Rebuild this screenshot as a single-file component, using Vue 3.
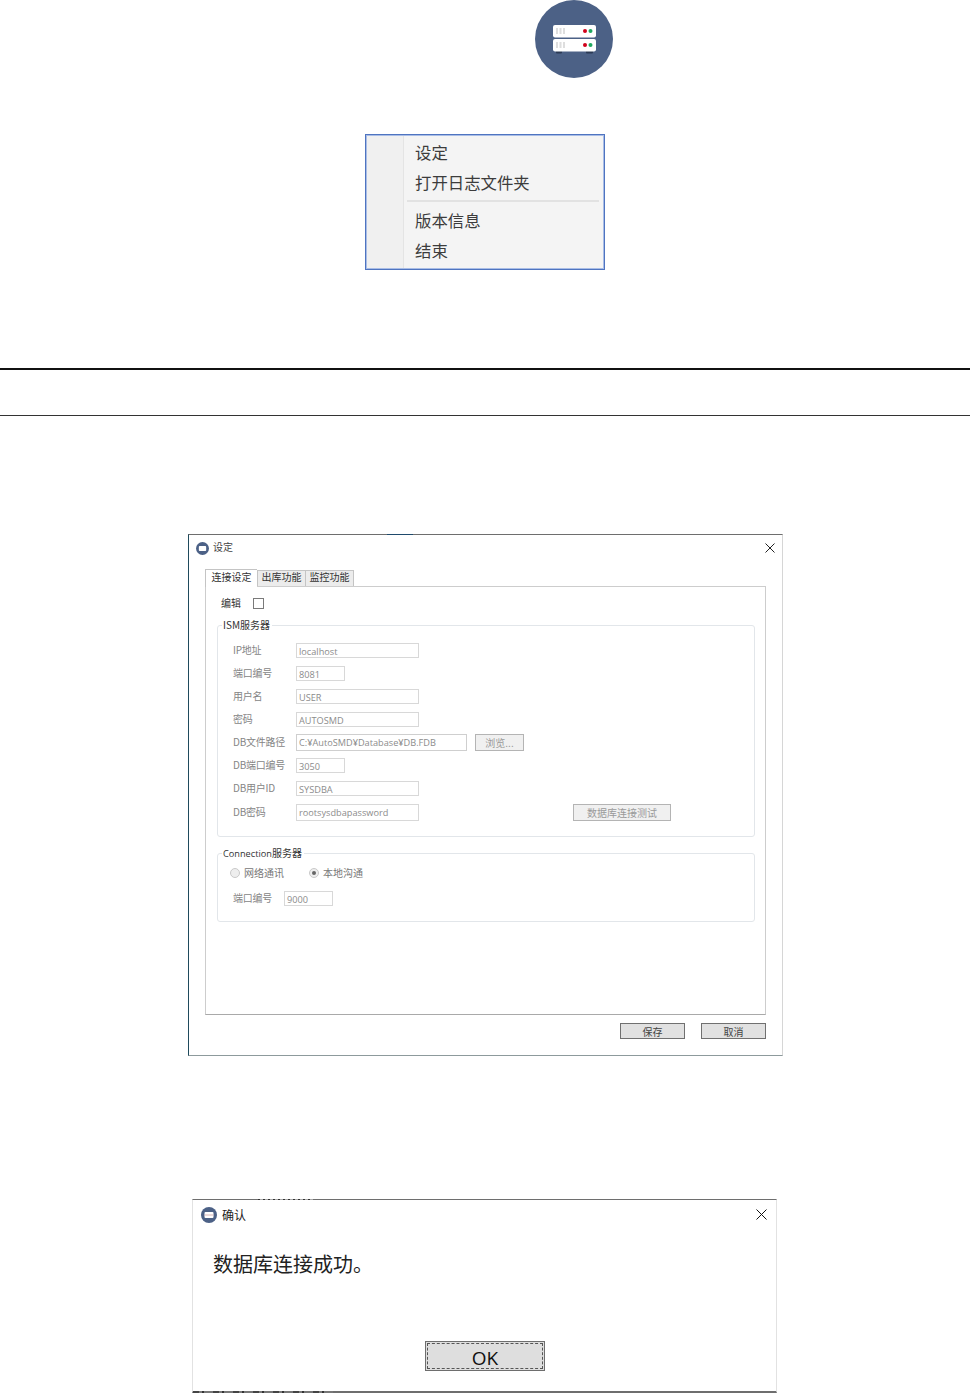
<script setup>
const rows = [
  { label: 'IP地址', value: 'localhost', size: 'md' },
  { label: '端口编号', value: '8081', size: 'sm' },
  { label: '用户名', value: 'USER', size: 'md' },
  { label: '密码', value: 'AUTOSMD', size: 'md' },
  { label: 'DB文件路径', value: 'C:¥AutoSMD¥Database¥DB.FDB', size: 'lg', browse: true },
  { label: 'DB端口编号', value: '3050', size: 'sm' },
  { label: 'DB用户ID', value: 'SYSDBA', size: 'md' },
  { label: 'DB密码', value: 'rootsysdbapassword', size: 'md tall', test: true },
]
</script>

<template>
  <div class="page">
    <div class="logo-wrap">
      <svg class="logo" viewBox="0 0 78 78" width="78" height="78">
        <circle cx="39" cy="39" r="39" fill="#4c6186" />
        <rect x="21" y="50" width="6" height="3.5" rx="1" fill="#2b3a55" />
        <rect x="51" y="50" width="7" height="3.5" rx="1" fill="#2b3a55" />
        <rect x="18" y="25" width="43" height="12.5" rx="2" fill="#fff" />
        <rect x="18" y="39" width="43" height="12.5" rx="2" fill="#fff" />
        <path d="M22 28v6M25.5 28v6M29 28v6M22 42v6M25.5 42v6M29 42v6" stroke="#dedede" stroke-width="2" />
        <circle cx="50" cy="31" r="2" fill="#d0021b" />
        <circle cx="55.5" cy="31" r="2" fill="#1fa860" />
        <circle cx="50" cy="45" r="2" fill="#d0021b" />
        <circle cx="55.5" cy="45" r="2" fill="#1fa860" />
      </svg>
    </div>

    <div class="menu">
      <div class="menu-item">设定</div>
      <div class="menu-item">打开日志文件夹</div>
      <div class="menu-sep"></div>
      <div class="menu-item">版本信息</div>
      <div class="menu-item">结束</div>
    </div>

    <div class="rule-thick"></div>
    <div class="rule-thin"></div>

    <section class="settings">
      <header class="titlebar">
        <svg class="mini" viewBox="0 0 16 16" width="13" height="13">
          <circle cx="8" cy="8" r="8" fill="#4c6186" />
          <rect x="3.5" y="5" width="9" height="6" rx="1" fill="#fff" />
        </svg>
        <span class="title">设定</span>
        <svg class="close" viewBox="0 0 10 10" width="10" height="10">
          <path d="M.5.5l9 9M9.5.5l-9 9" stroke="#222" stroke-width="1" fill="none" />
        </svg>
      </header>

      <nav class="tabs">
        <div class="tab active">连接设定</div>
        <div class="tab tab-b">出库功能</div>
        <div class="tab tab-c">监控功能</div>
      </nav>

      <div class="panel">
        <div class="edit-row">
          <span class="edit-label">编辑</span>
          <span class="check"></span>
        </div>

        <div class="group group-ism">
          <span class="legend">ISM服务器</span>
          <div v-for="r in rows" :key="r.label" class="row">
            <span class="label">{{ r.label }}</span>
            <span class="field" :class="r.size">{{ r.value }}</span>
            <span v-if="r.browse" class="btn-off browse">浏览...</span>
            <span v-if="r.test" class="btn-off test">数据库连接测试</span>
          </div>
        </div>

        <div class="group group-conn">
          <span class="legend"><span class="latin">Connection</span>服务器</span>
          <div class="radios">
            <span class="radio"></span>
            <span class="radio-label first">网络通讯</span>
            <span class="radio on"></span>
            <span class="radio-label">本地沟通</span>
          </div>
          <div class="row port">
            <span class="label short">端口编号</span>
            <span class="field sm">9000</span>
          </div>
        </div>
      </div>

      <footer class="footer">
        <span class="btn">保存</span>
        <span class="btn">取消</span>
      </footer>
    </section>

    <section class="confirm">
      <header class="confirm-bar">
        <svg class="mini" viewBox="0 0 16 16" width="16" height="16">
          <circle cx="8" cy="8" r="8" fill="#4c6186" />
          <rect x="3.5" y="5" width="9" height="6" rx="1" fill="#fff" />
          <path d="M3.5 8h9" stroke="#d9b6b6" stroke-width="1" />
        </svg>
        <span class="confirm-title">确认</span>
        <svg class="close" viewBox="0 0 11 11" width="11" height="11">
          <path d="M.5.5l10 10M10.5.5l-10 10" stroke="#111" stroke-width="1" fill="none" />
        </svg>
      </header>
      <p class="message">数据库连接成功。</p>
      <div class="ok-wrap">
        <div class="ok"><span class="ok-inner">OK</span></div>
      </div>
    </section>
  </div>
</template>

<style scoped>
.page {
  width: 970px;
  height: 1393px;
  overflow: hidden;
  background: #fff;
  font-family: "Noto Sans CJK SC", "Noto Sans", sans-serif;
}
.logo-wrap { height: 78px; padding-left: 535px; }
.logo { display: block; }

.menu {
  box-sizing: border-box;
  width: 240px;
  height: 136px;
  margin: 56px 0 0 365px;
  padding: 2px 5px 0 37px;
  border: 1px solid #4f74c0;
  box-shadow: inset 0 0 0 1px #a9bde6;
  background: linear-gradient(to right, #f0f0f0 37px, #e4e4e4 37px, #e4e4e4 38px, #f4f4f4 38px);
  color: #3c3c3c;
  font-size: 16.4px;
}
.menu-item { height: 30px; line-height: 30px; padding-left: 12px; }
.menu-sep { height: 2px; margin: 3px 0 3px 4px; background: #e2e2e2; }

.rule-thick { height: 2px; margin-top: 98px; background: #111; }
.rule-thin { height: 1px; margin-top: 45px; background: #333; }

.settings {
  box-sizing: border-box;
  position: relative;
  width: 595px;
  height: 522px;
  margin: 118px 0 0 188px;
  border-top: 1px solid #6e6e6e;
  border-left: 1px solid #1f4a5c;
  border-right: 1px solid #d6d6d6;
  border-bottom: 1px solid #8d9a9c;
  display: flex;
  flex-direction: column;
}
.settings::before {
  content: "";
  position: absolute;
  left: 198px;
  top: -1px;
  width: 26px;
  height: 1px;
  background: #1f4a6c;
}
.titlebar {
  height: 26px;
  display: flex;
  align-items: center;
  padding: 0 7px;
  color: #444;
}
.title { margin-left: 4px; padding-bottom: 2px; font-size: 10px; line-height: 1; }
.close { margin-left: auto; }

.tabs {
  display: flex;
  align-items: flex-end;
  height: 25px;
  padding-left: 16px;
  font-size: 10px;
  color: #333;
}
.tab {
  box-sizing: border-box;
  height: 16px;
  line-height: 12px;
  text-align: center;
  background: #ececec;
  border: 1px solid #c4c4c4;
  border-bottom: 0;
}
.tab.active {
  width: 52px;
  height: 18px;
  line-height: 14px;
  background: #fff;
  position: relative;
  top: 1px;
  border-right: 0;
}
.tab-b { width: 49px; }
.tab-c { width: 49px; margin-left: -1px; }

.panel {
  box-sizing: border-box;
  width: 561px;
  height: 429px;
  margin-left: 16px;
  padding: 0 0 0 11px;
  border: 1px solid #cdcdcd;
  border-bottom-color: #a9a9a9;
}
.edit-row {
  display: flex;
  align-items: center;
  height: 12px;
  margin-top: 10px;
  padding-left: 4px;
  font-size: 10px;
  color: #333;
}
.edit-label { padding-bottom: 2px; }
.check {
  box-sizing: border-box;
  width: 11px;
  height: 11px;
  margin-left: 12px;
  border: 1px solid #7a7a7a;
  background: #fff;
}

.group {
  box-sizing: border-box;
  position: relative;
  width: 538px;
  border: 1px solid #e2e6ea;
  border-radius: 3px;
}
.group-ism { height: 212px; margin-top: 16px; padding: 13px 0 0 15px; }
.group-conn { height: 69px; margin-top: 16px; padding: 11px 0 0 12px; }
.legend {
  position: absolute;
  top: -8px;
  left: 4px;
  padding: 0 2px 0 1px;
  background: #fff;
  font-size: 10px;
  line-height: 13px;
  color: #333;
  white-space: nowrap;
}
.latin { font-family: "Open Sans", sans-serif; font-size: 9.2px; }
.row { display: flex; align-items: center; height: 23px; }
.label {
  width: 63px;
  padding-bottom: 2px;
  font-size: 10px;
  letter-spacing: -0.25px;
  color: #858585;
  white-space: nowrap;
}
.field {
  box-sizing: border-box;
  height: 15px;
  padding-left: 2px;
  border: 1px solid #d8d8d8;
  font-family: "Open Sans", "Noto Sans CJK SC", sans-serif;
  font-size: 9.2px;
  line-height: 15px;
  color: #8c8c8c;
  white-space: nowrap;
}
.md { width: 123px; }
.sm { width: 49px; }
.lg { width: 171px; height: 17px; line-height: 16px; border-color: #cfcfcf; }
.tall { height: 17px; line-height: 16px; }
.group-ism .row:last-child { margin-top: 1px; }
.btn-off {
  box-sizing: border-box;
  height: 17px;
  line-height: 15px;
  text-align: center;
  background: #f0f0f0;
  border: 1px solid #b4b4b4;
  font-size: 10px;
  color: #9a9a9a;
}
.browse { width: 49px; margin-left: 8px; }
.test { width: 98px; margin-left: 154px; }

.radios {
  display: flex;
  align-items: center;
  height: 14px;
  font-size: 10px;
  color: #777;
}
.radio {
  box-sizing: border-box;
  position: relative;
  width: 10px;
  height: 10px;
  margin-top: 1px;
  border-radius: 50%;
  background: #eee;
  border: 1px solid #c9c9c9;
}
.radio.on::after {
  content: "";
  position: absolute;
  left: 2px;
  top: 2px;
  width: 4px;
  height: 4px;
  border-radius: 50%;
  background: #666;
}
.radio-label { margin-left: 4px; }
.radio-label.first { margin-right: 25px; }
.port { margin-top: 8px; padding-left: 3px; }
.label.short { width: 51px; }

.footer {
  display: flex;
  justify-content: flex-end;
  gap: 16px;
  margin-top: 8px;
  padding-right: 16px;
}
.btn {
  box-sizing: border-box;
  width: 65px;
  height: 16px;
  line-height: 15px;
  text-align: center;
  background: #e1e1e1;
  border: 1px solid #707070;
  font-size: 10px;
  color: #444;
}

.confirm {
  box-sizing: border-box;
  position: relative;
  width: 585px;
  height: 194px;
  margin: 143px 0 0 192px;
  border-top: 1px solid #6e6e6e;
  border-left: 1px solid #e2e2e2;
  border-right: 1px solid #e2e2e2;
  border-bottom: 2px solid #6e6e6e;
}
.confirm::before {
  content: "";
  position: absolute;
  left: 0;
  bottom: -2px;
  width: 140px;
  height: 2px;
  background: repeating-linear-gradient(to right, #444 0 6px, #7a7a7a 6px 9px, #333 9px 11px, #777 11px 20px);
}
.confirm::after {
  content: "";
  position: absolute;
  left: 65px;
  top: -1px;
  width: 55px;
  height: 1px;
  background: repeating-linear-gradient(to right, #333 0 2px, #aaa 2px 5px);
}
.confirm-bar {
  display: flex;
  align-items: center;
  height: 29px;
  padding: 0 9px 2px 8px;
  color: #222;
}
.confirm-title { margin-left: 5px; font-size: 12px; line-height: 1; }
.message {
  margin: 18px 0 0 20px;
  font-size: 20px;
  line-height: 29px;
  color: #222;
}
.ok-wrap { margin-top: 63px; padding-left: 232px; }
.ok {
  box-sizing: border-box;
  width: 120px;
  height: 30px;
  padding: 1px;
  background: #dedede;
  border: 1px solid #6e6e6e;
  font-family: "Open Sans", sans-serif;
}
.ok-inner {
  display: block;
  box-sizing: border-box;
  height: 26px;
  line-height: 28px;
  text-align: center;
  border: 1px dashed #555;
  font-size: 19px;
  color: #111;
}
</style>
